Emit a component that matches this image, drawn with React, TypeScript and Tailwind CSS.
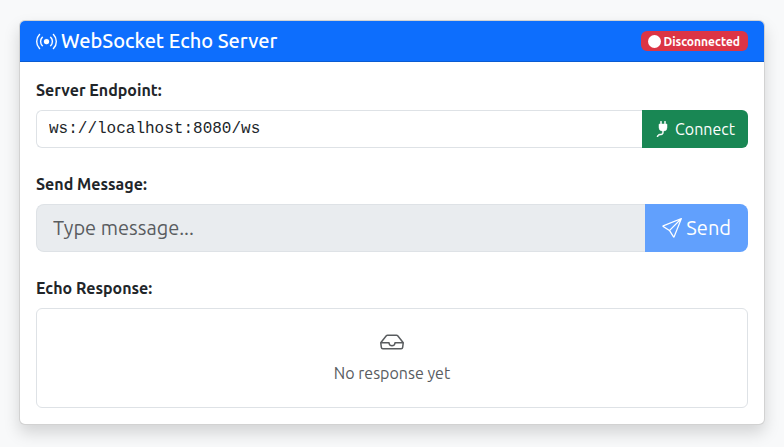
import { BsBroadcast, BsCircleFill, BsInbox, BsPlugFill, BsSend } from "react-icons/bs";

export default function App() {
  return (
    <main className="min-h-screen bg-[#f8f9fa] px-[19px] py-5 font-[Ubuntu,'Noto_Sans',sans-serif] text-base text-[#212529]">
      <div className="rounded-md border border-black/[0.175] bg-white shadow-[0_8px_16px_rgba(0,0,0,0.15)]">
        <header className="flex items-center justify-between rounded-t-[5px] border-b border-[#0b5bd1] bg-[#0d6efd] px-4 py-2 text-white">
          <h1 className="flex items-center gap-1 text-xl leading-6 font-medium">
            <BsBroadcast aria-hidden="true" className="size-[21px]" strokeWidth={0.1} />
            WebSocket Echo Server
          </h1>
          <span className="flex h-5 items-center gap-0.5 rounded-md bg-[#dc3545] pr-2 pl-[7px] text-xs leading-3 font-bold">
            <BsCircleFill aria-hidden="true" className="size-[13px]" />
            <span className="pt-0.5">Disconnected</span>
          </span>
        </header>

        <div className="flex flex-col gap-6 p-4">
          <div>
            <label htmlFor="endpoint" className="mb-2 block leading-6 font-semibold">
              Server Endpoint:
            </label>
            <div className="flex">
              <input
                id="endpoint"
                type="text"
                defaultValue="ws://localhost:8080/ws"
                className="h-[38px] min-w-0 flex-1 rounded-l-md border border-r-0 border-[#dee2e6] bg-white px-3 font-['Liberation_Mono',monospace] text-base"
              />
              <button
                type="button"
                className="flex h-[38px] items-center gap-1 rounded-r-md bg-[#198754] px-[13px] text-white"
              >
                <BsPlugFill aria-hidden="true" strokeWidth={0.5} />
                Connect
              </button>
            </div>
          </div>

          <div>
            <label htmlFor="message" className="mb-2 block leading-6 font-semibold">
              Send Message:
            </label>
            <div className="flex">
              <input
                id="message"
                type="text"
                disabled
                placeholder="Type message..."
                className="h-12 min-w-0 flex-1 rounded-l-lg border border-r-0 border-[#dee2e6] bg-[#e9ecef] px-4 pb-0.5 text-xl placeholder:text-[#595c5f]"
              />
              <button
                type="button"
                disabled
                className="flex h-12 items-center gap-1 rounded-r-lg bg-[#0d6efd] px-[17px] text-xl text-white opacity-65"
              >
                <BsSend aria-hidden="true" />
                Send
              </button>
            </div>
          </div>

          <section aria-labelledby="response-title">
            <h2 id="response-title" className="mb-2 leading-6 font-semibold">
              Echo Response:
            </h2>
            <div className="flex min-h-[100px] flex-col items-center rounded-md border border-[#dee2e6] p-4 text-[#595c5f]">
              <div className="flex h-9 items-center pb-0.5 text-2xl">
                <BsInbox aria-hidden="true" />
              </div>
              <p className="leading-6">No response yet</p>
            </div>
          </section>
        </div>
      </div>
    </main>
  );
}
